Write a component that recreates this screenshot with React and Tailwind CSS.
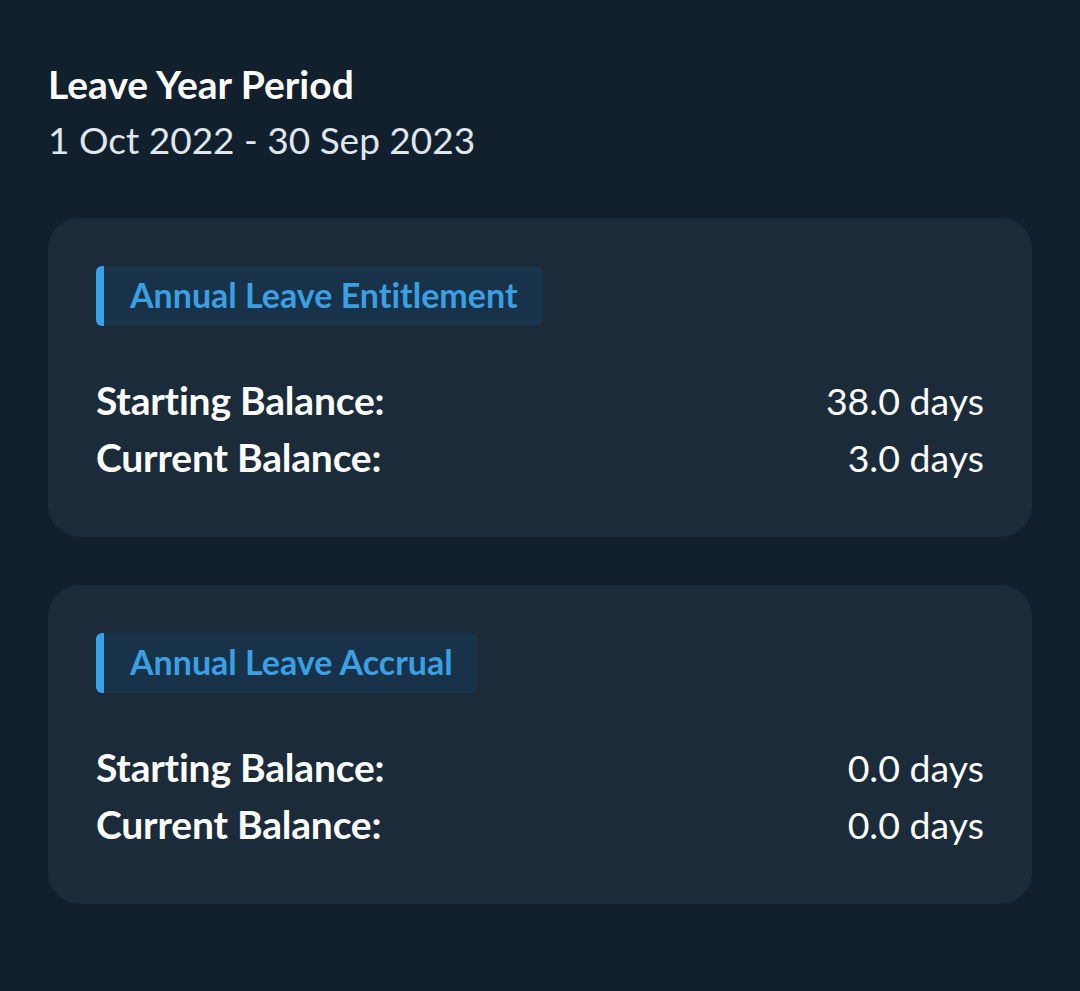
export default function App() {
  const cards = [
    {
      title: 'Annual Leave Entitlement',
      rows: [
        { label: 'Starting Balance:', value: '38.0 days' },
        { label: 'Current Balance:', value: '3.0 days' },
      ],
    },
    {
      title: 'Annual Leave Accrual',
      rows: [
        { label: 'Starting Balance:', value: '0.0 days' },
        { label: 'Current Balance:', value: '0.0 days' },
      ],
    },
  ];

  return (
    <div className="min-h-[991px] bg-[#121f2c] px-12 pt-[56px] pb-12 font-['Lato',sans-serif] text-white [font-variant-ligatures:none]">
      {/* Header */}
      <div>
        <h1 className="text-[39px] font-bold leading-[56px]">Leave Year Period</h1>
        <p className="text-[37px] leading-[56px] text-[#dfe6ee]">1 Oct 2022 - 30 Sep 2023</p>
      </div>

      <div className="mt-[50px] flex flex-col gap-[48px]">
        {cards.map((card) => (
          <div key={card.title} className="rounded-[32px] bg-[#1b2b3a] px-12 pt-12 pb-[51px]">
            <div className="inline-flex h-[60px] items-center rounded-[6px] border-l-[8px] border-[#3aa0e8] bg-[#183349] pb-[4px] pl-[26px] pr-[25px]">
              <span className="text-[34px] font-bold text-[#3b9fe3]">{card.title}</span>
            </div>
            <div className="mt-[46px] flex flex-col">
              {card.rows.map((row) => (
                <div key={row.label} className="flex items-center justify-between leading-[57px]">
                  <span className="text-[39px] font-bold tracking-[-0.2px]">{row.label}</span>
                  <span className="text-[37.5px]">{row.value}</span>
                </div>
              ))}
            </div>
          </div>
        ))}
      </div>
    </div>
  );
}
